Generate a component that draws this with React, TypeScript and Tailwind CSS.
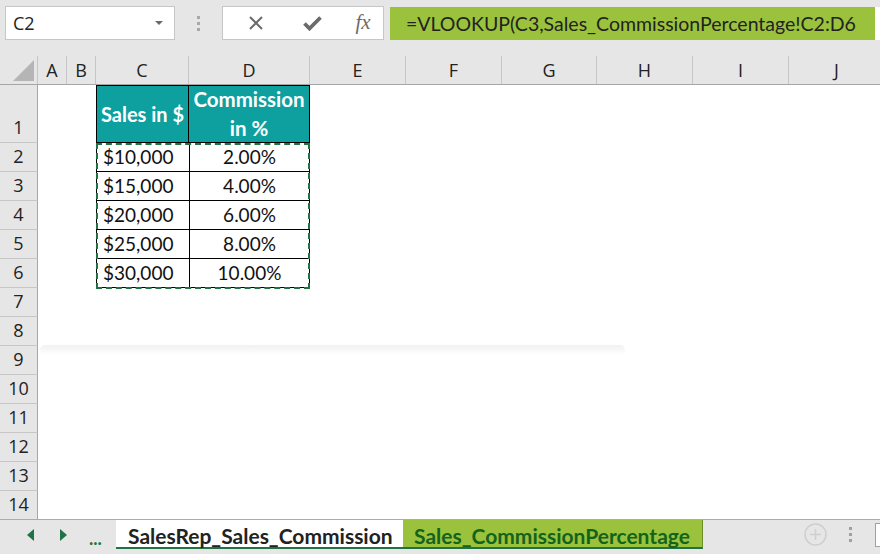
import React from "react";

const cols = [
  { name: "A", w: 29 },
  { name: "B", w: 29 },
  { name: "C", w: 93 },
  { name: "D", w: 121 },
  { name: "E", w: 96 },
  { name: "F", w: 96 },
  { name: "G", w: 95 },
  { name: "H", w: 96 },
  { name: "I", w: 96 },
  { name: "J", w: 96 },
];

const data = [
  ["$10,000", "2.00%"],
  ["$15,000", "4.00%"],
  ["$20,000", "6.00%"],
  ["$25,000", "8.00%"],
  ["$30,000", "10.00%"],
];

const cellFont = { fontFamily: "Lato, 'Open Sans', sans-serif" };
const uiFont = { fontFamily: "'Open Sans', 'Noto Sans', sans-serif" };

function FormulaBar() {
  return (
    <div className="h-[56px] bg-[#e6e6e6] flex items-start pt-[6px]">
      <div className="ml-[5px] w-[170px] h-[34px] bg-white border border-[#c6c6c6] flex items-center justify-between pl-[7px] pr-[10px]">
        <span className="text-[18px] text-[#222]" style={uiFont}>
          C2
        </span>
        <svg width="10" height="6" viewBox="0 0 10 6">
          <path d="M1 1h8L5 5z" fill="#6b6b6b" />
        </svg>
      </div>
      <div className="w-[47px] h-[34px] flex flex-col items-center justify-center gap-[3px]">
        <span className="w-[3px] h-[3px] bg-[#a8a8a8]" />
        <span className="w-[3px] h-[3px] bg-[#a8a8a8]" />
        <span className="w-[3px] h-[3px] bg-[#a8a8a8]" />
      </div>
      <div className="w-[162px] h-[34px] bg-white border border-[#c6c6c6] flex items-center">
        <div className="w-[57px] flex justify-center pl-[8px]">
          <svg width="16" height="16" viewBox="0 0 16 16">
            <path d="M2 2l12 12M14 2L2 14" stroke="#6b6b6b" strokeWidth="2" />
          </svg>
        </div>
        <div className="w-[57px] flex justify-center pl-[8px]">
          <svg width="19" height="16" viewBox="0 0 19 16">
            <path d="M1.5 8.5l5 5L17.5 2.5" stroke="#6b6b6b" strokeWidth="3.8" fill="none" />
          </svg>
        </div>
        <div className="flex-1 flex justify-center pl-[6px]">
          <span className="text-[21px] italic text-[#6b6b6b]" style={{ fontFamily: "'Liberation Serif', serif" }}>
            fx
          </span>
        </div>
      </div>
      <div className="ml-[6px] w-[485px] h-[33px] mt-[1px] bg-[#9bc23c] flex items-center pl-[16px]">
        <span className="text-[19.5px] text-[#222] whitespace-nowrap" style={cellFont}>
          =VLOOKUP(C3,Sales_CommissionPercentage!C2:D6
        </span>
      </div>
      <div className="flex-1 h-[33px] mt-[1px] bg-white" />
    </div>
  );
}

function ColumnHeaders() {
  return (
    <div className="flex h-[29px] bg-[#e6e6e6] border-b border-[#a6a6a6]" style={uiFont}>
      <div className="w-[38px] shrink-0 relative border-r border-[#c6c6c6]">
        <svg className="absolute right-[3px] bottom-[3px]" width="21" height="21" viewBox="0 0 21 21">
          <path d="M21 0V21H0z" fill="#b5b5b5" />
        </svg>
      </div>
      {cols.map((c) => (
        <div
          key={c.name}
          className="shrink-0 flex items-center justify-center text-[18px] text-[#222] border-r border-[#c6c6c6]"
          style={{ width: c.w }}
        >
          {c.name}
        </div>
      ))}
    </div>
  );
}

function RowHeader({ n, h }: { n: number; h: string }) {
  return (
    <div
      className={`w-[38px] shrink-0 bg-[#e6e6e6] border-r border-r-[#a6a6a6] border-b border-b-[#c6c6c6] flex items-end justify-center pb-[1px] text-[18px] text-[#222] ${h}`}
      style={uiFont}
    >
      {n}
    </div>
  );
}

function Sheet() {
  return (
    <div className="relative bg-white">
      <ColumnHeaders />
      <div className="flex">
        <RowHeader n={1} h="h-[58px]" />
        <div className="w-[58px] shrink-0" />
        <div className="w-[93px] h-[58px] shrink-0 bg-[#0e9f9f] border border-black flex items-center justify-center">
          <span className="text-white font-bold text-[20px] leading-[24px] whitespace-nowrap" style={cellFont}>
            Sales in $
          </span>
        </div>
        <div className="w-[121px] h-[58px] shrink-0 bg-[#0e9f9f] border border-black border-l-0 flex items-center justify-center text-center">
          <span className="text-white font-bold text-[20.5px] leading-[29px]" style={cellFont}>
            Commission
            <br />
            in %
          </span>
        </div>
      </div>
      {data.map(([a, b], i) => (
        <div key={i} className="flex">
          <RowHeader n={i + 2} h="h-[29px]" />
          <div className="w-[58px] shrink-0" />
          <div
            className="w-[93px] h-[29px] shrink-0 border-l border-b border-black flex items-center pl-[6px] text-[19px] text-[#111]"
            style={cellFont}
          >
            {a}
          </div>
          <div
            className="w-[121px] h-[29px] shrink-0 border-x border-b border-black flex items-center justify-center text-[19px] text-[#111]"
            style={cellFont}
          >
            {b}
          </div>
        </div>
      ))}
      {[7, 8, 9, 10, 11, 12, 13, 14].map((n) => (
        <div key={n} className="flex">
          <RowHeader n={n} h="h-[29px]" />
        </div>
      ))}
      <div className="absolute left-[96px] top-[87px] w-[214px] h-[146px] border-2 border-dashed border-[#217346] pointer-events-none" />
      <div className="absolute left-[40px] top-[289px] w-[585px] h-[10px] bg-gradient-to-b from-[#f1f1f1] to-white rounded-full pointer-events-none" />
    </div>
  );
}

function TabBar() {
  return (
    <div className="h-[35px] bg-[#e6e6e6] border-t border-[#ababab] flex items-start" style={cellFont}>
      <div className="w-[116px] h-[29px] flex items-center shrink-0">
        <svg className="ml-[27px]" width="7" height="12" viewBox="0 0 7 12">
          <path d="M7 0v12L0 6z" fill="#217346" />
        </svg>
        <svg className="ml-[26px]" width="7" height="12" viewBox="0 0 7 12">
          <path d="M0 0v12l7-6z" fill="#217346" />
        </svg>
        <span className="ml-[22px] text-[18px] font-bold text-[#217346] leading-none pt-[6px]">...</span>
      </div>
      <div className="w-[287px] h-[29px] bg-white border-b-2 border-[#217346] flex items-center pl-[12px] shrink-0">
        <span className="text-[21px] font-bold text-[#222] leading-none pt-[4px] whitespace-nowrap">SalesRep_Sales_Commission</span>
      </div>
      <div className="w-[300px] h-[29px] bg-[#9bc23c] border-b-2 border-[#217346] border-r border-r-[#6d8f2a] flex items-center pl-[11px] shrink-0">
        <span className="text-[21px] font-bold text-[#14631c] leading-none pt-[4px] whitespace-nowrap">Sales_CommissionPercentage</span>
      </div>
      <div className="flex-1 h-[29px] flex items-center justify-end">
        <svg className="mr-[22px]" width="23" height="23" viewBox="0 0 23 23">
          <circle cx="11.5" cy="11.5" r="10.5" fill="none" stroke="#cfcfcf" strokeWidth="1.5" />
          <path d="M11.5 6v11M6 11.5h11" stroke="#cfcfcf" strokeWidth="1.5" />
        </svg>
        <div className="flex flex-col gap-[3px] mr-[23px]">
          <span className="w-[3px] h-[3px] bg-[#a0a0a0]" />
          <span className="w-[3px] h-[3px] bg-[#a0a0a0]" />
          <span className="w-[3px] h-[3px] bg-[#a0a0a0]" />
        </div>
        <div className="w-[5px] h-[24px] bg-white border border-[#a0a0a0] border-r-0" />
      </div>
    </div>
  );
}

export default function App() {
  return (
    <div className="w-[880px] h-[554px] overflow-hidden bg-[#e6e6e6] flex flex-col">
      <FormulaBar />
      <div className="h-[463px] overflow-hidden">
        <Sheet />
      </div>
      <TabBar />
    </div>
  );
}
